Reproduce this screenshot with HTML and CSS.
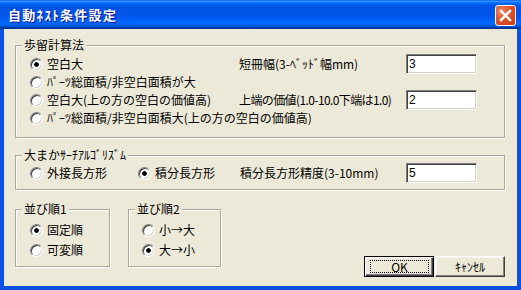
FILE: index.html
```html
<!DOCTYPE html>
<html lang="ja">
<head>
    <meta charset="UTF-8">
    <title>自動ﾈｽﾄ条件設定</title>
    <link rel="stylesheet" href="styles.css">
</head>
<body>
    <div class="window">
        <div class="titlebar">
            <span class="title">自動ﾈｽﾄ条件設定</span>
            <span class="close">
                <svg width="19" height="19" viewBox="0 0 19 19">
                    <path d="M5 5 L14 14 M14 5 L5 14" stroke="#fff" stroke-width="2.4" stroke-linecap="square"/>
                </svg>
            </span>
        </div>

        <div class="client">
            <!-- 歩留計算法 -->
            <div class="group group-yield">
                <span class="group-title">歩留計算法</span>
                <div class="option"><span class="radio checked"></span>空白大</div>
                <span class="field-label">短冊幅(3-ﾍﾞｯﾄﾞ幅mm)</span>
                <input class="edit" type="text" value="3">
                <div class="option wide"><span class="radio"></span>ﾊﾟｰﾂ総面積/非空白面積が大</div>
                <div class="option"><span class="radio"></span>空白大(上の方の空白の価値高)</div>
                <span class="field-label tight">上端の価値(1.0-10.0下端は1.0)</span>
                <input class="edit" type="text" value="2">
                <div class="option wide"><span class="radio"></span>ﾊﾟｰﾂ総面積/非空白面積大(上の方の空白の価値高)</div>
            </div>

            <!-- 大まかサーチアルゴリズム -->
            <div class="group group-search">
                <span class="group-title">大まかｻｰﾁｱﾙｺﾞﾘｽﾞﾑ</span>
                <div class="option"><span class="radio"></span>外接長方形</div>
                <div class="option"><span class="radio checked"></span>積分長方形</div>
                <span class="field-label">積分長方形精度(3-10mm)</span>
                <input class="edit" type="text" value="5">
            </div>

            <div class="bottom-row">
                <div class="group group-order">
                    <span class="group-title">並び順1</span>
                    <div class="option"><span class="radio checked"></span>固定順</div>
                    <div class="option"><span class="radio"></span>可変順</div>
                </div>
                <div class="group group-order second">
                    <span class="group-title">並び順2</span>
                    <div class="option"><span class="radio"></span>小→大</div>
                    <div class="option"><span class="radio checked"></span>大→小</div>
                </div>

                <div class="buttons">
                    <button class="btn default"><span class="focus">OK</span></button>
                    <button class="btn">ｷｬﾝｾﾙ</button>
                </div>
            </div>
        </div>
    </div>
</body>
</html>
```

FILE: styles.css
```css
html, body {
    margin: 0;
    padding: 0;
    background-color: #ece9d8;
}
body {
    font-family: 'Noto Sans CJK JP', 'Liberation Sans', sans-serif;
    font-size: 12px;
    color: #000;
}
.window {
    width: 521px;
    height: 290px;
    display: flex;
    flex-direction: column;
}
.titlebar {
    height: 29px;
    box-sizing: border-box;
    display: flex;
    align-items: flex-start;
    justify-content: space-between;
    background: linear-gradient(to bottom, #0058ee 0%, #3a93ff 4%, #288eff 6%, #127dff 8%, #036ffc 10%, #0262ee 14%, #0057e5 20%, #0054e3 24%, #0055eb 56%, #005bf5 66%, #026afe 76%, #0062ef 86%, #0052d6 92%, #0040ab 94%, #003092 100%);
}
.title {
    margin: 7px 0 0 8px;
    font-size: 13px;
    font-weight: bold;
    line-height: 16px;
    letter-spacing: 1.3px;
    color: #fff;
    text-shadow: 1px 1px #0f1089;
}
.close {
    width: 21px;
    height: 21px;
    box-sizing: border-box;
    margin: 5px 5px 0 0;
    border: 1px solid #fff;
    border-radius: 3px;
    display: flex;
    align-items: center;
    justify-content: center;
    background: radial-gradient(circle at 30% 30%, #f08a66 0%, #e0522d 45%, #c33b13 100%);
}
.client {
    flex: 1;
    background-color: #ece9d8;
    border: 4px solid #0a50e3;
    border-top: none;
    padding: 16px 12px 9px 11px;
}
.group {
    position: relative;
    border: 1px solid #aca899;
    box-shadow: 1px 1px #fff, inset 1px 1px #fff;
}
.group-title {
    position: absolute;
    top: -8px;
    left: 6px;
    padding: 0 2px;
    line-height: 14px;
    background-color: #ece9d8;
    white-space: nowrap;
}
.option {
    display: flex;
    align-items: center;
    gap: 4px;
    white-space: nowrap;
    line-height: 14px;
}
.radio {
    width: 13px;
    height: 13px;
    box-sizing: border-box;
    flex: none;
    border-radius: 50%;
    border: 1px solid;
    border-color: #808080 #fff #fff #808080;
    box-shadow: inset 1px 1px #404040, inset -1px -1px #d4d0c8;
    background-color: #fff;
}
.radio.checked {
    background: radial-gradient(circle, #000 0, #000 2px, #fff 2.6px);
}
.field-label {
    white-space: nowrap;
    line-height: 14px;
}
.field-label.tight {
    letter-spacing: -0.6px;
}
.edit {
    width: 71px;
    height: 20px;
    box-sizing: border-box;
    margin: 0;
    padding: 0 2px;
    border: 1px solid;
    border-color: #808080 #fff #fff #808080;
    box-shadow: inset 1px 1px #404040, inset -1px -1px #d4d0c8;
    background-color: #fff;
    font-family: 'Liberation Sans', sans-serif;
    font-size: 12px;
    color: #000;
    outline: none;
}
.group-yield {
    display: grid;
    grid-template-columns: 209px 167px 71px;
    grid-auto-rows: 18px;
    align-items: center;
    padding: 9px 0 10px 14px;
}
.group-yield .wide {
    grid-column: 1 / -1;
}
.group-search {
    margin-top: 17px;
    display: grid;
    grid-template-columns: 108px 102px 166px 71px;
    grid-auto-rows: 18px;
    align-items: center;
    padding: 8px 0 7px 14px;
}
.bottom-row {
    margin-top: 19px;
    display: flex;
    align-items: flex-start;
}
.group-order {
    width: 95px;
    box-sizing: border-box;
    display: grid;
    grid-auto-rows: 20px;
    align-items: center;
    padding: 10px 0 6px 14px;
}
.group-order.second {
    width: 93px;
    margin-left: 18px;
    padding-left: 13px;
}
.buttons {
    margin-left: auto;
    margin-top: 47px;
    display: flex;
    gap: 1px;
}
.btn {
    width: 70px;
    height: 21px;
    box-sizing: border-box;
    margin: 0;
    padding: 0;
    font-family: 'Noto Sans CJK JP', 'Liberation Sans', sans-serif;
    font-size: 12px;
    color: #000;
    background-color: #ece9d8;
    border: 1px solid;
    border-color: #fff #404040 #404040 #fff;
    box-shadow: inset -1px -1px #808080, inset 1px 1px #f4f3ee;
}
.btn.default {
    display: flex;
    padding: 3px 4px 3px 5px;
    border: 1px solid #000;
    box-shadow: inset 1px 1px #fff, inset -1px -1px #404040, inset -2px -2px #808080;
}
.focus {
    flex: 1;
    display: flex;
    align-items: center;
    justify-content: center;
    border: 1px dotted #000;
    line-height: 12px;
}
```
